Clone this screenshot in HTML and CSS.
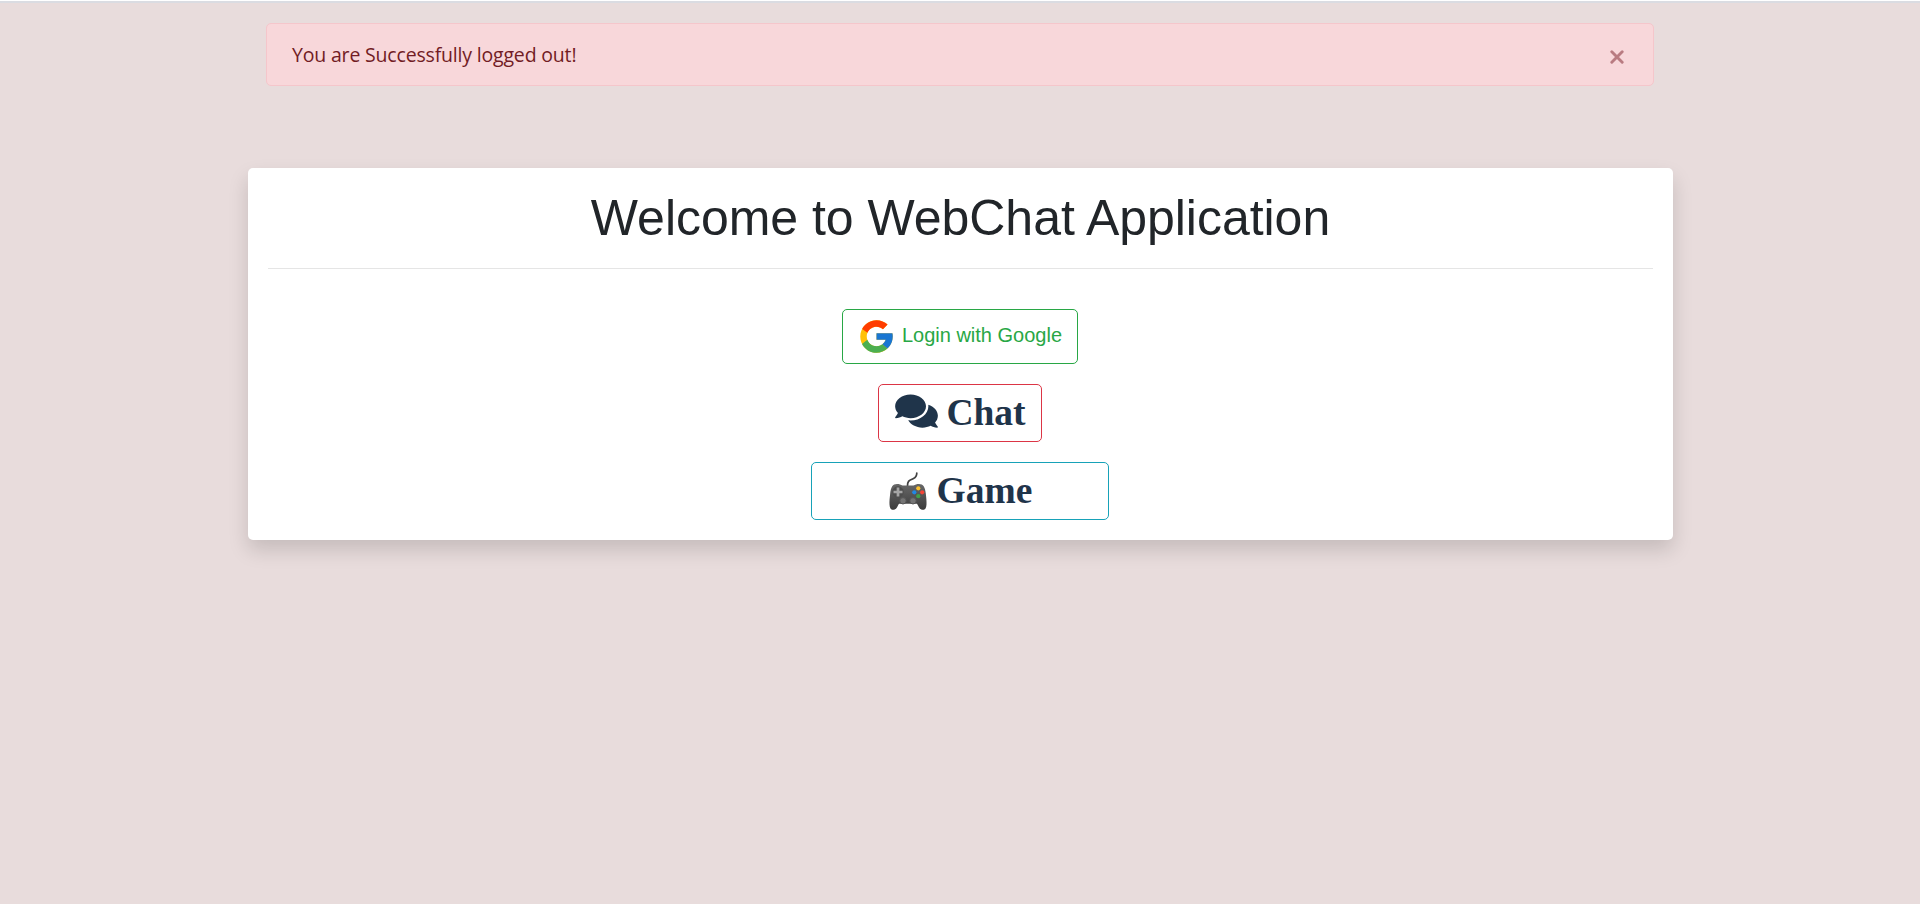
FILE: index.html
```html
<!DOCTYPE html>
<html lang="en">
<head>
<meta charset="utf-8">
<title>WebChat</title>
<link rel="stylesheet" href="styles.css">
</head>
<body>
<div class="alert" role="alert">
  <span class="alert-text">You are Successfully logged out!</span>
  <button class="close" aria-label="Close"><svg width="14" height="14" viewBox="0 0 14 14"><path d="M1.800 1.800l10.400 10.400M12.200 1.800l-10.400 10.400"/></svg></button>
</div>
<main class="card">
  <h1 class="title">Welcome to WebChat Application</h1>
  <hr class="rule">
  <div class="actions">
    <a class="btn btn-login">
      <svg class="google-icon" width="39" height="39" viewBox="0 0 48 48">
        <path fill="#ffc107" d="M43.611 20.083H42V20H24v8h11.303c-1.649 4.657-6.080 8-11.303 8-6.627 0-12-5.373-12-12s5.373-12 12-12c3.059 0 5.842 1.154 7.961 3.039l5.657-5.657C34.046 6.053 29.268 4 24 4 12.955 4 4 12.955 4 24s8.955 20 20 20 20-8.955 20-20c0-1.341-.138-2.650-.389-3.917z"/>
        <path fill="#ff3d00" d="M6.306 14.691l6.571 4.819C14.655 15.108 18.961 12 24 12c3.059 0 5.842 1.154 7.961 3.039l5.657-5.657C34.046 6.053 29.268 4 24 4 16.318 4 9.656 8.337 6.306 14.691z"/>
        <path fill="#4caf50" d="M24 44c5.166 0 9.860-1.977 13.409-5.192l-6.190-5.238C29.211 35.091 26.715 36 24 36c-5.202 0-9.619-3.317-11.283-7.946l-6.522 5.025C9.505 39.556 16.227 44 24 44z"/>
        <path fill="#1976d2" d="M43.611 20.083H42V20H24v8h11.303c-.792 2.237-2.231 4.166-4.087 5.571l6.193 5.238C36.971 39.205 44 34 44 24c0-1.341-.138-2.650-.389-3.917z"/>
      </svg>
      <span class="login-text">Login with Google</span>
    </a>
    <a class="btn btn-chat">
      <svg class="chat-icon" width="43" height="38" viewBox="0 0 576 512"><path fill="#1f344a" d="M416 192c0-88.400-93.100-160-208-160S0 103.600 0 192c0 34.300 14.100 65.900 38 92-13.400 30.200-35.500 54.200-35.800 54.500-2.200 2.300-2.800 5.700-1.500 8.700S4.800 352 8 352c36.600 0 66.900-12.300 88.700-25 32.200 15.700 70.300 25 111.300 25 114.900 0 208-71.600 208-160zm122 220c23.900-26 38-57.700 38-92 0-66.900-53.500-124.200-129.300-148.100.9 6.600 1.300 13.300 1.300 20.100 0 105.900-107.700 192-240 192-10.800 0-21.300-.8-31.700-1.900C207.800 439.600 281.800 480 368 480c41 0 79.100-9.200 111.300-25 21.800 12.700 52.100 25 88.700 25 3.200 0 6.100-1.900 7.300-4.800 1.300-2.900.7-6.300-1.500-8.700-.3-.2-22.400-24.200-35.800-54.500z"/></svg>
      <span>Chat</span>
    </a>
    <a class="btn btn-game">
      <svg class="game-icon" width="38" height="38" viewBox="0 0 38 38">
        <defs>
          <linearGradient id="body" x1="0" y1="0" x2="0" y2="1"><stop offset="0" stop-color="#686868"/><stop offset="1" stop-color="#3b3b3b"/></linearGradient>
        </defs>
        <path d="M18.500 14c0-6 2.500-5.500 6-7.500 2.600-1.300 3.300-2.500 3.300-5.500" fill="none" stroke="#424242" stroke-width="1.700" stroke-linecap="round"/>
        <path fill="url(#body)" d="M8 12c2.200 0 4 .6 5.500 1.500h11c1.500-.9 3.300-1.500 5.500-1.500 4.300 0 6.100 3 6.800 9.500.5 4.500.9 8 .7 11-.2 3.500-1.200 5.300-3.400 5.300-2.600 0-4-1.500-5.100-4.300-.6-1.400-1-1.800-2-1.800H11c-1 0-1.500.4-2 1.800-1.100 2.800-2.500 4.300-5.100 4.300C1.700 37.800.7 36 .5 32.500c-.2-3 .2-6.500.7-11C1.900 15 3.700 12 8 12z"/>
        <circle cx="9" cy="20" r="5.700" fill="#4d4d4d"/>
        <path d="M9 15.500v9M4.500 20h9" stroke="#a5a5a5" stroke-width="2.700"/>
        <circle cx="14" cy="28.800" r="3.200" fill="#757575" stroke="#555"/>
        <circle cx="24" cy="28.800" r="3.200" fill="#757575" stroke="#555"/>
        <circle cx="29.300" cy="16.300" r="2.100" fill="#fbc02d"/>
        <circle cx="25.300" cy="20.300" r="2.100" fill="#2088e5"/>
        <circle cx="33.200" cy="20.300" r="2.100" fill="#f44336"/>
        <circle cx="29.300" cy="24.200" r="2.100" fill="#43a047"/>
      </svg>
      <span>Game</span>
    </a>
  </div>
</main>
</body>
</html>
```
FILE: styles.css
```css
* { box-sizing: border-box; }
html { background: #e8dcdc; }
body {
  margin: 0;
  height: 904px;
  overflow: hidden;
  padding-top: 20px;
  border-top: 1px solid #fff;
  background: linear-gradient(#dadce2 0 2px, #e8dcdc 2px);
  font-family: "Liberation Sans", Arial, sans-serif;
  font-size: 20px;
  color: #212529;
}
.alert {
  display: flex;
  align-items: center;
  justify-content: space-between;
  width: 1388px;
  height: 63px;
  margin: 2px 0 0 266px;
  padding: 0 29px 0 25px;
  border: 1px solid #f5c6cb;
  border-radius: 5px;
  background: #f8d7da;
  color: #721c24;
}
.alert-text {
  font-family: "Open Sans", "Noto Sans", sans-serif;
  font-size: 19.5px;
  letter-spacing: -0.18px;
  line-height: 30px;
  padding-top: 1px;
}
.close {
  display: flex;
  padding: 4px 0 0;
  border: 0;
  background: none;
}
.close svg { fill: none; stroke: #b97b81; stroke-width: 2.9; stroke-linecap: round; }
.card {
  width: 1425px;
  height: 372px;
  margin: 82px 0 0 248px;
  padding: 20px;
  border-radius: 5px;
  background: #fff;
  box-shadow: 0 10px 20px rgba(0, 0, 0, 0.15);
}
.title {
  margin: 0;
  font-size: 50px;
  font-weight: 400;
  line-height: 60px;
  letter-spacing: -0.03px;
  text-align: center;
}
.rule {
  height: 1px;
  margin: 20px 0 40px;
  border: 0;
  background: #e5e5e5;
}
.actions {
  display: flex;
  flex-direction: column;
  align-items: center;
  gap: 20px;
  padding-right: 1px;
}
.btn {
  display: flex;
  align-items: center;
  justify-content: center;
  border: 1px solid;
  border-radius: 5px;
}
.btn-login { width: 236px; height: 55px; gap: 6px; padding-right: 1px; color: #28a745; }
.login-text { padding-bottom: 3px; }
.btn-chat, .btn-game {
  height: 58px;
  padding-left: 1px;
  font: bold 37.5px "Liberation Serif", "Times New Roman", serif;
}
.btn-chat { width: 164px; gap: 8px; border-color: #dc3545; }
.btn-game { width: 298px; gap: 10px; border-color: #17a2b8; }
.btn-chat span, .btn-game span { padding-bottom: 2px; color: #1f344a; }
.chat-icon { margin-bottom: 4px; }
```
